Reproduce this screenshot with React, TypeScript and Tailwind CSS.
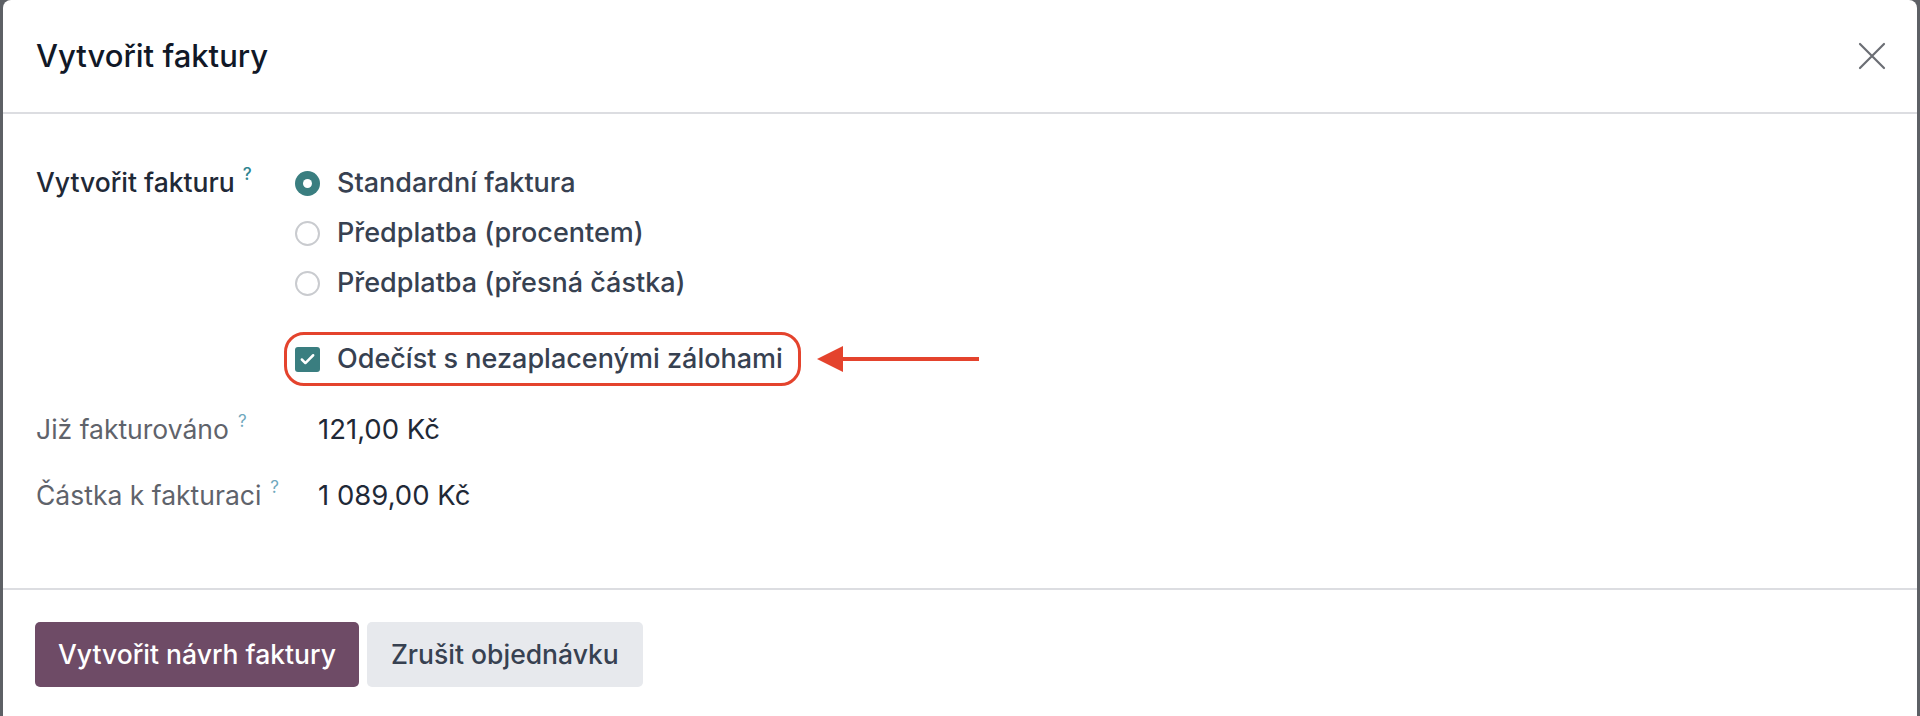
import { Check } from "lucide-react";

const options = [
  { label: "Standardní faktura", checked: true },
  { label: "Předplatba (procentem)", checked: false },
  { label: "Předplatba (přesná částka)", checked: false },
];

const amounts = [
  { label: "Již fakturováno", value: "121,00 Kč" },
  { label: "Částka k fakturaci", value: "1 089,00 Kč" },
];

export default function App() {
  return (
    <div className="h-[716px] overflow-hidden bg-[#5d6065] px-[3px] font-['Inter','Noto_Sans',sans-serif]">
      <div className="h-[760px] rounded-t-[8px] bg-white">
        {/* Header */}
        <div className="flex h-[114px] items-center justify-between border-b-2 border-[#dcdde1] pl-[33px] pr-[30px]">
          <h1 className="text-[31px] font-medium text-[#111827]">
            Vytvořit faktury
          </h1>
          <button className="flex h-[30px] w-[30px] items-center justify-center text-[#6b6e74]">
            <svg viewBox="0 0 28 28" className="h-[28px] w-[28px]" aria-hidden="true">
              <path
                d="M2 2 L26 26 M26 2 L2 26"
                stroke="currentColor"
                strokeWidth="2.2"
                strokeLinecap="round"
              />
            </svg>
          </button>
        </div>

        {/* Body */}
        <div className="pl-[33px] pt-[44px] pb-[59px]">
          <div className="flex">
            <div className="flex h-[50px] w-[259px] items-center text-[26.5px] font-medium text-[#1f2937]">
              Vytvořit fakturu
              <sup className="relative -top-[9px] ml-[8px] text-[17px] font-medium text-[#2f8591]">
                ?
              </sup>
            </div>
            <div className="flex flex-col">
              {options.map((o) => (
                <div
                  key={o.label}
                  className="flex h-[50px] items-center gap-[17px] text-[27px] font-medium text-[#374151]"
                >
                  {o.checked ? (
                    <span className="flex h-[25px] w-[25px] items-center justify-center rounded-full bg-[#3a7e80]">
                      <span className="h-[9px] w-[9px] rounded-full bg-white" />
                    </span>
                  ) : (
                    <span className="h-[25px] w-[25px] rounded-full border-2 border-[#c9cbcf] bg-white" />
                  )}
                  {o.label}
                </div>
              ))}
            </div>
          </div>

          {/* Highlighted checkbox with annotation arrow */}
          <div className="mt-[24px] flex items-center pl-[248px]">
            <div className="flex h-[54px] items-center gap-[17px] rounded-[20px] border-[3px] border-[#e4432d] pl-[8px] pr-[15px] text-[27px] font-medium text-[#374151]">
              <span className="flex h-[25px] w-[25px] items-center justify-center rounded-[3px] bg-[#3a7e80]">
                <Check className="h-[17px] w-[17px] text-white" strokeWidth={3.5} />
              </span>
              Odečíst s nezaplacenými zálohami
            </div>
            <svg
              viewBox="0 0 162 26"
              className="ml-[16px] h-[26px] w-[162px]"
              aria-hidden="true"
            >
              <path d="M0 13 L26 0 L26 26 Z" fill="#e4432d" />
              <path d="M20 13 H162" stroke="#e4432d" strokeWidth="4" />
            </svg>
          </div>

          <div className="mt-[11px] flex flex-col">
            {amounts.map((a) => (
              <div key={a.label} className="flex h-[66px] items-center">
                <div className="flex w-[282px] items-center text-[26.5px] text-[#5f636b]">
                  {a.label}
                  <sup className="relative -top-[9px] ml-[9px] text-[17px] text-[#6fa8bd]">
                    ?
                  </sup>
                </div>
                <div className="text-[27.5px] text-[#1f2937]">{a.value}</div>
              </div>
            ))}
          </div>
        </div>

        {/* Footer */}
        <div className="flex gap-[8px] border-t-2 border-[#dcdde1] pl-[32px] pt-[32px]">
          <button className="h-[65px] rounded-[5px] bg-[#6e4b66] px-[23px] text-[26.5px] font-medium text-white">
            Vytvořit návrh faktury
          </button>
          <button className="h-[65px] rounded-[5px] bg-[#e7e9ed] px-[24px] text-[26.5px] font-medium text-[#374151]">
            Zrušit objednávku
          </button>
        </div>
      </div>
    </div>
  );
}
